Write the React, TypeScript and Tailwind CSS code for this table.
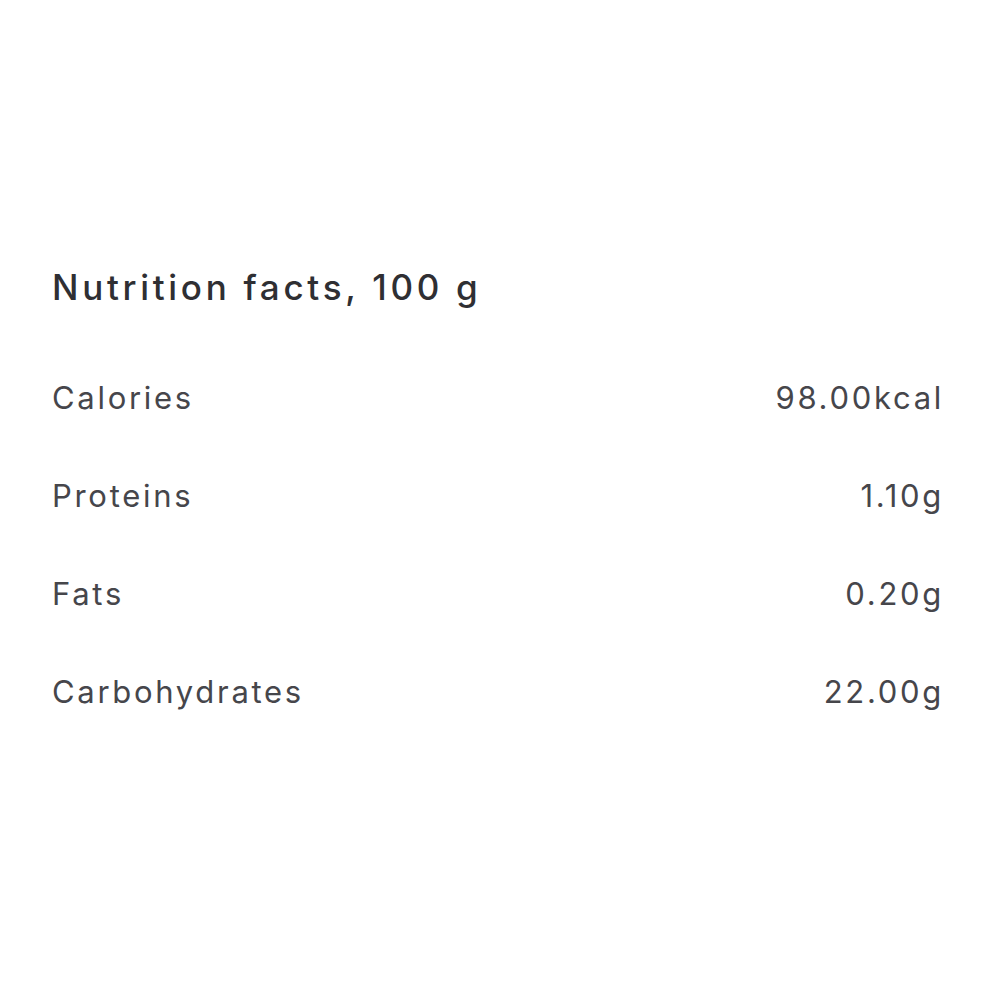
const rows = [
  { label: "Calories", value: "98.00kcal" },
  { label: "Proteins", value: "1.10g" },
  { label: "Fats", value: "0.20g" },
  { label: "Carbohydrates", value: "22.00g" },
];

export default function App() {
  return (
    <div className="w-[1000px] h-[1000px] bg-white flex flex-col pt-[263px] pl-[52px] pr-[56px] font-['Inter',sans-serif]">
      <h2 className="text-[35px] leading-[48px] font-medium text-[#2f2f33] mb-[67px] tracking-[3.7px]">
        Nutrition facts, 100 g
      </h2>
      <div className="flex flex-col gap-[58px]">
        {rows.map((r) => (
          <div key={r.label} className="flex items-center justify-between text-[31px] leading-[40px] text-[#46464b] tracking-[2.7px]">
            <span>{r.label}</span>
            <span>{r.value}</span>
          </div>
        ))}
      </div>
    </div>
  );
}
